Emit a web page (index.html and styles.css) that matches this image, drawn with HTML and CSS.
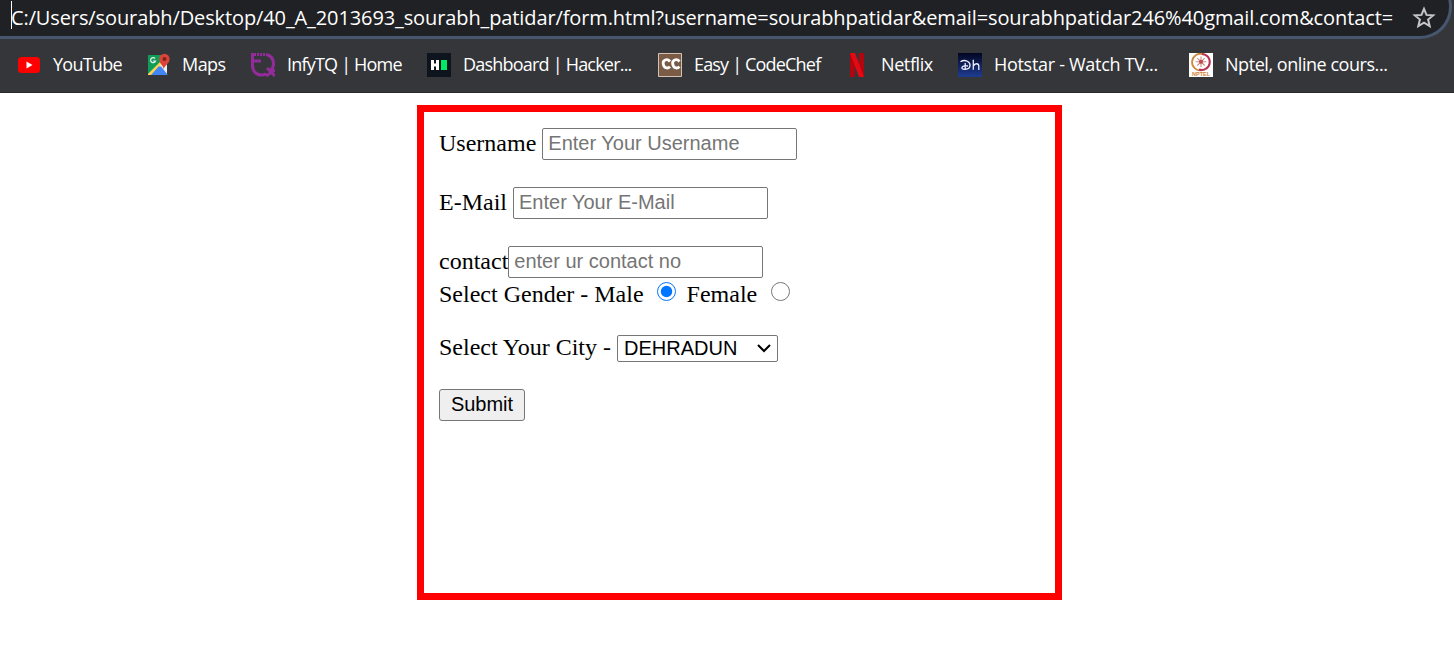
FILE: index.html
```html
<!DOCTYPE html>
<html lang="en">
<head>
<meta charset="utf-8">
<title>Form</title>
<link rel="stylesheet" href="styles.css">
</head>
<body>
<header class="chrome">
  <div class="omnibox">
    <span class="url">C:/Users/sourabh/Desktop/40_A_2013693_sourabh_patidar/form.html?username=sourabhpatidar&amp;email=sourabhpatidar246%40gmail.com&amp;contact=</span>
    <svg class="star" width="24" height="24" viewBox="0 0 24 24"><path d="M12 2.800l2.500 6.100 6.700.5-5.100 4.200 1.600 6.500-5.700-3.500-5.700 3.500 1.600-6.500-5.100-4.200 6.700-.5z" fill="none" stroke="#c3c5c8" stroke-width="2"/></svg>
  </div>
  <nav class="bookmarks">
    <a class="bookmark"><svg class="icon" viewBox="0 0 24 24"><rect x="1" y="4" width="22" height="16" rx="3.500" fill="#f00"/><path d="M9.500 8.500v7l6-3.500z" fill="#fff"/></svg><span class="label youtube">YouTube</span></a>
    <a class="bookmark"><svg class="icon" viewBox="0 0 24 24"><path d="M2 2h18v20H2z" fill="#4285f4"/><path d="M2 2h16v4L2 21z" fill="#0f9d58"/><path d="M2 21L17 6l2 3L6 22H2z" fill="#ffd54f"/><path d="M13 13l9 9H5z" fill="#4285f4"/><path d="M15 10l6-3v14l-7-9z" fill="#eceff1"/><path d="M9 5.500a2.500 2.500 0 1 0 .5 2.500H7" fill="none" stroke="#eee" stroke-width="1.200"/><path d="M17.700 16c-.5-4-4.500-5-4.500-10a5.200 5.200 0 0 1 10.400 0c0 5-5 6-5.900 10z" fill="#db4437"/><circle cx="18.500" cy="6" r="2" fill="#7b231c"/></svg><span class="label maps">Maps</span></a>
    <a class="bookmark"><svg class="icon" viewBox="0 0 24 24" fill="none" stroke="#942b9b"><path d="M1.500 0v14M1 8h9" stroke-width="3"/><path d="M3 1.500h12" stroke-width="3" stroke-dasharray="2 1"/><path d="M15 1.500c5 1 7.500 4.500 7.500 9.500 0 4-2 6-4 8M1.500 12c0 8 6 12 14 9" stroke-width="3"/><path d="M16 15l8 8M24 17l-9 6" stroke-width="3"/></svg><span class="label infytq">InfyTQ | Home</span></a>
    <a class="bookmark"><svg class="icon" viewBox="0 0 24 24"><path d="M0 0h24v24H0z" fill="#0e141e"/><path d="M5.500 7v10M10.500 7v10M5 12h6" stroke="#fff" stroke-width="3"/><path d="M14 7h6v10h-6z" fill="#00ea64"/></svg><span class="label hacker">Dashboard | Hacker...</span></a>
    <a class="bookmark"><svg class="icon" viewBox="0 0 24 24"><path d="M.5.5h23v23H.5z" fill="#795b46" stroke="#d6c1b2"/><path d="M12 8.500C9 5 4.500 7 5.200 11s4.300 5.200 6.800 2.600M21.500 8.500c-3-3.500-7.500-1.500-6.800 2.500s4.300 5.200 6.800 2.600" fill="none" stroke="#fff" stroke-width="2.800"/></svg><span class="label codechef">Easy | CodeChef</span></a>
    <a class="bookmark"><svg class="icon" viewBox="0 0 24 24"><path d="M5 0h4.800v24H5zM14 0h5v24h-5z" fill="#b1060f"/><path d="M5 0h5l9 24h-5z" fill="#e50914"/></svg><span class="label netflix">Netflix</span></a>
    <a class="bookmark"><svg class="icon" viewBox="0 0 24 24"><defs><linearGradient id="sky" x2="0" y2="1"><stop stop-color="#020522"/><stop offset="1" stop-color="#1e3c91"/></linearGradient></defs><path d="M0 0h24v24H0z" fill="url(#sky)"/><path d="M2.500 8.700c5-3 10 .5 9.500 4-.4 4-6.500 4.500-8 2.700-1-2 3.500-3 6-2.400M7.200 10v6M15.300 6.800v10M15.500 13c1-3 5.300-3 5.300 0v4" fill="none" stroke="#eef" stroke-width="1.300"/></svg><span class="label hotstar">Hotstar - Watch TV...</span></a>
    <a class="bookmark"><svg class="icon" viewBox="0 0 24 24"><path d="M0 0h24v24H0z" fill="#fff"/><path d="M14 1.200A8.300 8.300 0 1 0 13 17.200" fill="none" stroke="#d18a3c" stroke-width="1.800"/><path d="M13 1a8 8 0 1 1-3 15.500" fill="none" stroke="#b83254" stroke-width="2"/><path d="M12 3.500v10.500M6.700 8.800h10.600M8.300 5.200l7.400 7.300M15.700 5.200l-7.400 7.300" stroke="#cd8d83" stroke-width="1.100"/><circle cx="12" cy="8.800" r="2" fill="#bd4c57"/><text x="3" y="22.800" class="nptel-mark" textLength="18" lengthAdjust="spacingAndGlyphs">NPTEL</text></svg><span class="label nptel">Nptel, online cours...</span></a>
  </nav>
</header>
<form class="panel">
  <div class="row"><label for="user">Username</label><input id="user" class="field spaced" type="text" placeholder="Enter Your Username"></div>
  <div class="row"><label for="mail">E-Mail</label><input id="mail" class="field spaced" type="text" placeholder="Enter Your E-Mail"></div>
  <div class="row contact"><label for="contact">contact</label><input id="contact" class="field" type="text" placeholder="enter ur contact no"></div>
  <div class="row gender"><label for="male">Select Gender - Male</label><input id="male" class="radio" type="radio" name="gender" checked><label for="female">Female</label><input id="female" class="radio last" type="radio" name="gender"></div>
  <div class="row city"><label for="city">Select Your City -</label><div class="select" id="city"><span>DEHRADUN</span><svg width="14" height="9" viewBox="0 0 14 9"><path d="M1 1l6 6 6-6" fill="none" stroke="#000" stroke-width="2"/></svg></div></div>
  <button class="submit" type="button">Submit</button>
</form>
</body>
</html>
```
FILE: styles.css
```css
* { box-sizing: border-box; }
body { margin: 0; background: #fff; height: 667px; overflow: hidden; }
.chrome { height: 93px; background: #35363a; border-bottom: 1px solid #292a2d; overflow: hidden; font-family: "Open Sans", "Noto Sans", sans-serif; color: #fff; }
.omnibox { display: flex; align-items: flex-start; width: 1452px; height: 64px; margin-top: -25px; padding: 26px 0 0 11px; background: #202124; border: solid #46566f; border-width: 0 3px 3px 0; border-radius: 0 32px 32px 0; }
.url { width: 1382px; height: 28px; border-left: 1px solid #fff; white-space: nowrap; font-size: 20px; line-height: 33px; letter-spacing: -0.11px; text-indent: -1px; }
.star { margin: 5px 0 0 19px; flex: none; }
.bookmarks { display: grid; grid-template-columns: 129px 105px 176px 231px 187px 113px 231px 220px; padding: 14px 0 0 17px; }
.bookmark { display: flex; align-items: center; gap: 12px; height: 24px; }
.icon { width: 24px; height: 24px; flex: none; }
.label { margin-bottom: 2px; white-space: nowrap; font-size: 18px; line-height: 24px; letter-spacing: -0.4px; }
.youtube { letter-spacing: -0.75px; }
.maps { letter-spacing: -0.55px; }
.infytq { letter-spacing: -0.8px; }
.hacker { letter-spacing: -0.79px; }
.codechef { letter-spacing: -0.82px; }
.hotstar { letter-spacing: -0.3px; }
.nptel { letter-spacing: -0.45px; }
.nptel-mark { font: bold 5px "Liberation Sans", sans-serif; fill: #cf8436; }

.panel { width: 645px; height: 495px; margin: 12px 0 0 417px; padding: 16px 15px; border: 7px solid red; font: 24px/27px "Liberation Serif", serif; color: #000; }
.row { display: flex; align-items: center; height: 32px; margin-bottom: 27px; white-space: nowrap; }
.row label { margin-bottom: 2px; }
.field { width: 255px; height: 32px; margin: 0; padding: 0 5px 2px; border: 1px solid #767676; border-radius: 2px; font: 20px "Liberation Sans", sans-serif; background: #fff; }
.field::placeholder { color: #757575; }
.spaced { margin-left: 6px; }
.contact { margin-bottom: 0; }
.gender { height: 33px; margin-bottom: 24px; }
.gender label { margin-bottom: 0; }
.radio { width: 19px; height: 19px; margin: 0 11px 6px 13px; }
.radio.last { margin-left: 14px; }
.city { height: 27px; }
.select { display: flex; align-items: center; justify-content: space-between; width: 161px; height: 27px; margin-left: 6px; padding: 0 6px; border: 1px solid #767676; border-radius: 2px; font: 20px "Liberation Sans", sans-serif; }
.submit { display: block; width: 86px; height: 32px; margin: 0; padding: 0 0 2px; border: 1px solid #767676; border-radius: 3px; background: #efefef; color: #000; font: 20px "Liberation Sans", sans-serif; }
```
